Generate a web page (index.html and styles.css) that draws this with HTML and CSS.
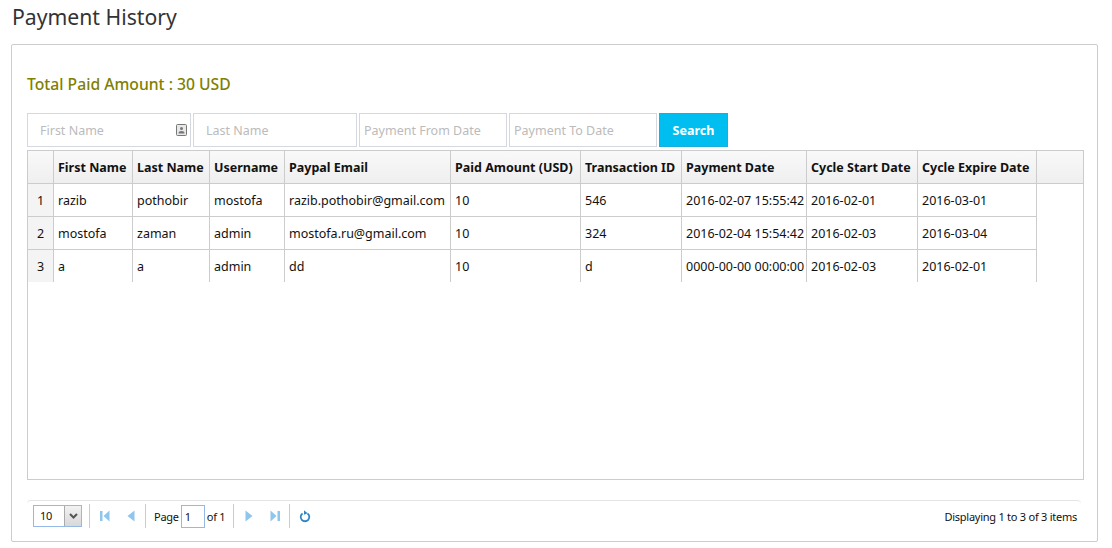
FILE: index.html
```html
<!DOCTYPE html>
<html lang="en">
<head>
<meta charset="utf-8">
<title>Payment History</title>
<link rel="stylesheet" href="styles.css">
</head>
<body>
<h1 class="title">Payment History</h1>
<section class="panel">
  <h2 class="total">Total Paid Amount : 30 USD</h2>
  <form class="filters">
    <div class="field field-wide">
      <input class="input" placeholder="First Name">
      <svg class="contact" width="11" height="12" viewBox="0 0 11 12"><rect x="0.5" y="0.5" width="10" height="11" rx="1" fill="#e8e8e8" stroke="#777"/><circle cx="5.5" cy="4.5" r="1.5" fill="#777"/><path d="M2.5 9.5c0-2 1.2-2.6 3-2.6s3 .6 3 2.6z" fill="#777"/></svg>
    </div>
    <div class="field field-wide"><input class="input" placeholder="Last Name"></div>
    <div class="field field-date"><input class="input input-date" placeholder="Payment From Date"></div>
    <div class="field field-date"><input class="input input-date" placeholder="Payment To Date"></div>
    <button class="search" type="button">Search</button>
  </form>
  <div class="grid">
    <table class="table">
      <colgroup>
        <col class="c0"><col class="c1"><col class="c2"><col class="c3"><col class="c4"><col class="c5"><col class="c6"><col class="c7"><col class="c8"><col class="c9"><col>
      </colgroup>
      <thead>
        <tr><th></th><th>First Name</th><th>Last Name</th><th>Username</th><th>Paypal Email</th><th>Paid Amount (USD)</th><th>Transaction ID</th><th>Payment Date</th><th>Cycle Start Date</th><th>Cycle Expire Date</th><th class="filler"></th></tr>
      </thead>
      <tbody>
        <tr><td class="num">1</td><td>razib</td><td>pothobir</td><td>mostofa</td><td>razib.pothobir@gmail.com</td><td>10</td><td>546</td><td>2016-02-07 15:55:42</td><td>2016-02-01</td><td>2016-03-01</td><td class="empty"></td></tr>
        <tr><td class="num">2</td><td>mostofa</td><td>zaman</td><td>admin</td><td>mostofa.ru@gmail.com</td><td>10</td><td>324</td><td>2016-02-04 15:54:42</td><td>2016-02-03</td><td>2016-03-04</td><td class="empty"></td></tr>
        <tr class="last"><td class="num">3</td><td>a</td><td>a</td><td>admin</td><td>dd</td><td>10</td><td>d</td><td>0000-00-00 00:00:00</td><td>2016-02-03</td><td>2016-02-01</td><td class="empty"></td></tr>
      </tbody>
    </table>
  </div>
  <div class="pager">
    <div class="pagesize"><span class="pagesize-value">10</span><span class="pagesize-btn"><svg width="9" height="6" viewBox="0 0 9 6"><path d="M1 1l3.5 3.5L8 1" fill="none" stroke="#555" stroke-width="2"/></svg></span></div>
    <span class="sep sep-a"></span>
    <button class="pbtn" type="button" aria-label="First"><svg width="10" height="12" viewBox="0 0 10 12"><rect x="0" y="1" width="2.5" height="10" fill="#8fc6ee"/><path d="M9.5 0.5v11L3.5 6z" fill="#8fc6ee"/></svg></button>
    <button class="pbtn" type="button" aria-label="Previous"><svg width="8" height="12" viewBox="0 0 8 12"><path d="M7.5 0.5v11L0.5 6z" fill="#8fc6ee"/></svg></button>
    <span class="sep sep-b"></span>
    <span class="label">Page</span><span class="pagebox">1</span><span class="label of">of 1</span>
    <span class="sep sep-c"></span>
    <button class="pbtn" type="button" aria-label="Next"><svg width="8" height="12" viewBox="0 0 8 12"><path d="M0.5 0.5v11L7.5 6z" fill="#8fc6ee"/></svg></button>
    <button class="pbtn" type="button" aria-label="Last"><svg width="10" height="12" viewBox="0 0 10 12"><path d="M0.5 0.5v11L6.5 6z" fill="#8fc6ee"/><rect x="7.5" y="1" width="2.5" height="10" fill="#8fc6ee"/></svg></button>
    <span class="sep sep-d"></span>
    <button class="pbtn" type="button" aria-label="Refresh"><svg width="12" height="13" viewBox="0 0 12 13"><path d="M3.6 3.4a4.3 4.3 0 1 0 4.8 0" fill="none" stroke="#2f86c5" stroke-width="1.8"/><path d="M5 0.2l3.6 3-3.6 1.6z" fill="#2f86c5"/></svg></button>
    <span class="info">Displaying 1 to 3 of 3 items</span>
  </div>
</section>
</body>
</html>
```
FILE: styles.css
```css
* { box-sizing: border-box; }
html, body { margin: 0; padding: 0; }
body {
  width: 1112px;
  height: 548px;
  overflow: hidden;
  background: #fff;
  color: #111;
  font-family: "Noto Sans", "Open Sans", sans-serif;
  font-size: 12.5px;
  padding: 0 14px 0 11px;
}
.title {
  margin: 0;
  height: 44px;
  padding: 1px 0 0 1px;
  font-size: 21.2px;
  line-height: 32px;
  font-weight: 400;
  color: #333;
}
.panel {
  height: 498px;
  border: 1px solid #ccc;
  border-radius: 2px;
  padding: 0 13px 0 15px;
}
.total {
  margin: 0;
  height: 68px;
  padding-top: 27px;
  font-size: 15.7px;
  line-height: 24px;
  font-weight: 500;
  color: #808000;
}
.filters { display: flex; height: 37px; align-items: flex-start; gap: 2px; }
.field { position: relative; height: 34px; }
.field-wide { width: 164px; }
.field-date { width: 148px; }
.input {
  display: block;
  width: 100%;
  height: 34px;
  border: 1px solid #d5d8e0;
  padding: 0 12px;
  font: inherit;
  outline: 0;
  background: #fff;
}
.input-date { padding: 0 4px; }
.input::placeholder { color: #bbb; opacity: 1; }
.contact { position: absolute; right: 4px; top: 11px; }
.search {
  width: 69px;
  height: 34px;
  border: 1px solid #19aedb;
  background: #00bff0;
  color: #fff;
  font: inherit;
  font-weight: 700;
  padding: 0;
}
.grid {
  width: 1057px;
  height: 330px;
  border: 1px solid #ccc;
}
.table {
  width: 1055px;
  table-layout: fixed;
  border-collapse: separate;
  border-spacing: 0;
}
.c0 { width: 26px; }
.c1 { width: 79px; }
.c2 { width: 77px; }
.c3 { width: 75px; }
.c4 { width: 166px; }
.c5 { width: 130px; }
.c6 { width: 101px; }
.c7 { width: 125px; }
.c8 { width: 111px; }
.c9 { width: 119px; }
th, td {
  height: 33px;
  padding: 1px 4px 0;
  text-align: left;
  white-space: nowrap;
  overflow: hidden;
  border-right: 1px solid #ccc;
  border-bottom: 1px solid #ccc;
}
th {
  background: linear-gradient(#f9f9f9, #efefef);
  font-weight: 700;
}
.filler { border-right: 0; }
.num { background: #f4f4f4; text-align: center; }
.empty { border: 0; }
.last td { height: 32px; padding-top: 0; border-bottom: 0; }
.pager {
  display: flex;
  align-items: center;
  width: 1054px;
  height: 31px;
  margin-top: 20px;
  padding: 0 4px 0 6px;
  border-top: 1px solid #e4e4e4;
  border-radius: 4px 4px 0 0;
  font-size: 11px;
  letter-spacing: -0.25px;
}
.pagesize {
  display: flex;
  width: 49px;
  height: 22px;
  border: 1px solid #95b8e7;
}
.pagesize-value { flex: 1; padding-left: 6px; line-height: 20px; }
.pagesize-btn {
  width: 17px;
  display: flex;
  align-items: center;
  justify-content: center;
  background: linear-gradient(#f2f2f2, #d8d8d8);
  border-left: 1px solid #aaa;
}
.sep { width: 1px; height: 24px; background: #ccc; }
.sep-a { margin: 0 2px 0 7px; }
.sep-b { margin: 0 8px 0 1px; }
.sep-c { margin: 0 2px 0 7px; }
.sep-d { margin: 0 2px 0 1px; }
.pbtn {
  width: 26px;
  height: 22px;
  padding: 0;
  border: 0;
  background: none;
  display: flex;
  align-items: center;
  justify-content: center;
}
.pagebox {
  width: 24px;
  height: 23px;
  margin-left: 2px;
  padding-left: 3px;
  line-height: 21px;
  border: 1px solid #95b8e7;
}
.of { margin-left: 2px; margin-right: 1px; }
.info { margin-left: auto; }
```
